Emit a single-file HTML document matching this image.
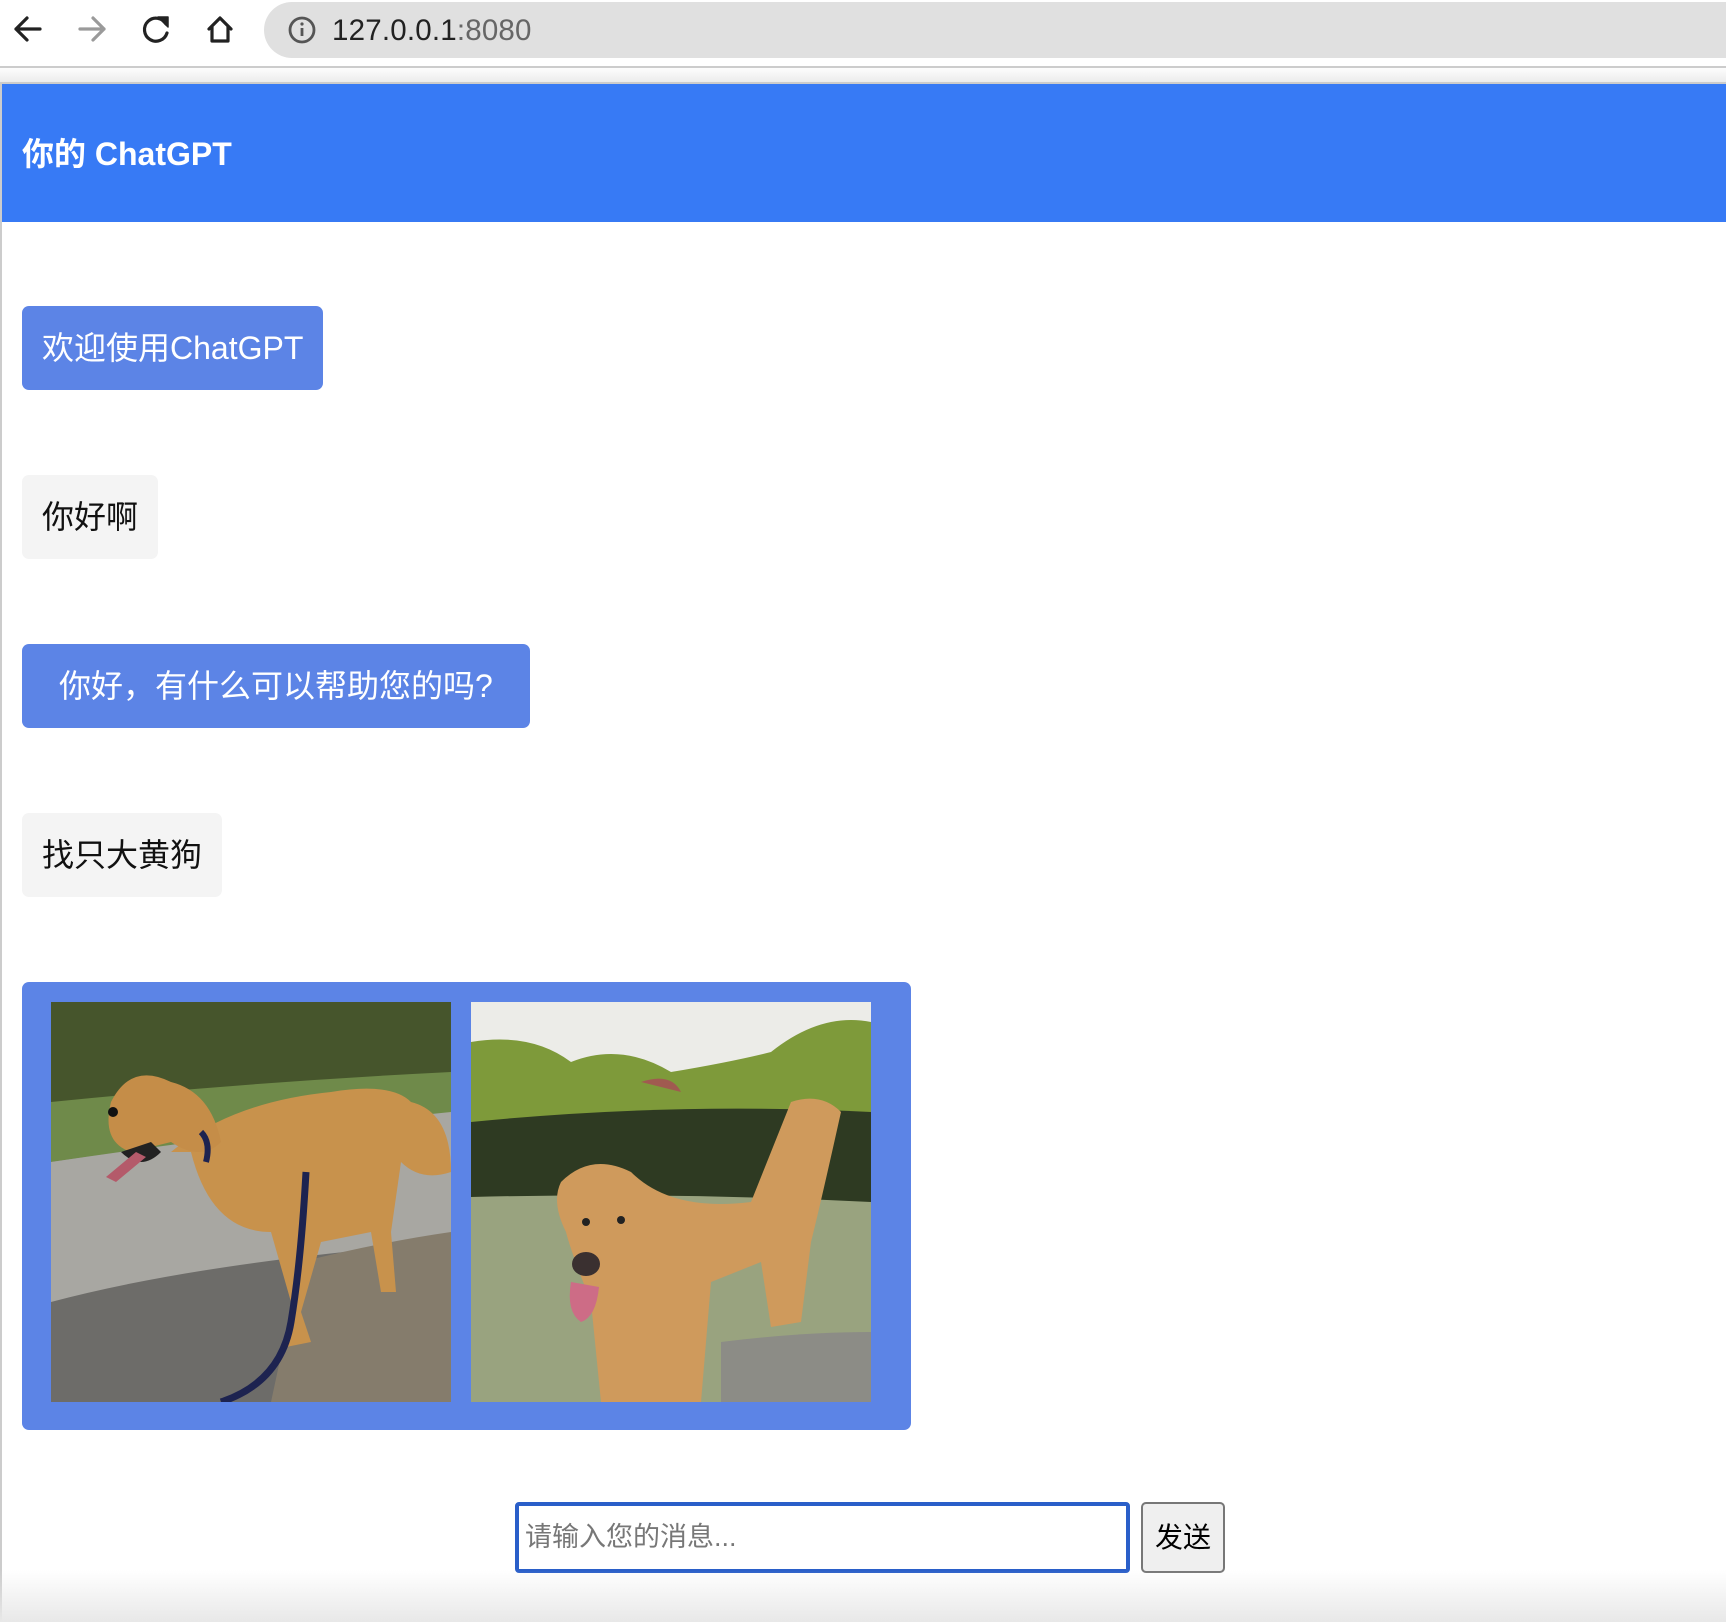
<!DOCTYPE html>
<html><head><meta charset="utf-8">
<style>
*{margin:0;padding:0;box-sizing:border-box}
html,body{width:1726px;height:1622px;overflow:hidden;background:#fff;font-family:"Liberation Sans","Noto Sans CJK SC",sans-serif}
.chrome{position:absolute;left:0;top:0;width:1726px;height:66px;background:#fff}
.url{position:absolute;left:264px;top:2px;width:1500px;height:56px;border-radius:28px;background:#e0e0e0}
.url span{position:absolute;left:68px;top:12px;font-size:29.5px;color:#222;letter-spacing:0.2px}
.url span i{font-style:normal;color:#666}
.sep1{position:absolute;left:0;top:66px;width:1726px;height:2px;background:#ccc}
.grad1{position:absolute;left:0;top:68px;width:1726px;height:14px;background:linear-gradient(#fdfdfd,#ececec)}
.sep2{position:absolute;left:0;top:82px;width:1726px;height:2px;background:#ccc}
.lb{position:absolute;left:0;top:84px;width:2px;height:1538px;background:#ccc}
.header{position:absolute;left:2px;top:84px;width:1724px;height:138px;background:#377af5}
.header h1{position:absolute;left:20px;top:50px;font-size:32px;font-weight:bold;color:#fff;line-height:40px}
.b{position:absolute;left:22px;height:84px;border-radius:7px;font-size:32px;line-height:84px;padding:0 20px;white-space:nowrap}
.blue{background:#5c84e6;color:#fff}
.gray{background:#f4f4f4;color:#111}
.box{position:absolute;left:22px;top:982px;width:889px;height:448px;background:#5c84e6;border-radius:7px}
.img{position:absolute;top:1002px;width:400px;height:400px}
.bottom{position:absolute;left:0;top:1570px;width:1726px;height:52px;background:linear-gradient(rgba(255,255,255,0),#e8e8e8)}
.inp{position:absolute;left:515px;top:1502px;width:615px;height:71px;border:4px solid #2a5fc9;border-radius:4px;background:#fff;font-size:27px;color:#777;line-height:63px;padding-left:6px}
.btn{position:absolute;left:1141px;top:1502px;width:84px;height:71px;border:2px solid #777;border-radius:5px;background:#efefef;font-size:28px;color:#000;text-align:center;line-height:67px}
</style></head><body>
<div class="chrome">
<svg width="260" height="60" style="position:absolute;left:0;top:0" fill="none" stroke-width="3.2" stroke-linecap="round" stroke-linejoin="round">
<path d="M40 29H16M27 18L16 29L27 40" stroke="#222"/>
<path d="M80 29H104M93 18L104 29L93 40" stroke="#9a9a9a"/>
<path d="M166 24A11.5 11.5 0 1 0 167 33" stroke="#222"/>
<path d="M158 17H168V27Z" fill="#222" stroke="#222" stroke-width="1.5"/>
<path d="M209 29L220 18L231 29M212 27V41H228V27" stroke="#222"/>
</svg>
<div class="url">
<svg width="30" height="30" style="position:absolute;left:23px;top:13px" fill="none"><circle cx="15" cy="15" r="12" stroke="#555" stroke-width="2.8"/><path d="M15 13v8" stroke="#555" stroke-width="2.8"/><circle cx="15" cy="9" r="1.6" fill="#555"/></svg>
<span>127.0.0.1<i>:8080</i></span></div>
</div>
<div class="sep1"></div><div class="grad1"></div><div class="sep2"></div>
<div class="lb"></div>
<div class="header"><h1>你的 ChatGPT</h1></div>

<div class="b blue" style="top:306px">欢迎使用ChatGPT</div>
<div class="b gray" style="top:475px">你好啊</div>
<div class="b blue" style="top:644px;padding:0 37px">你好，有什么可以帮助您的吗?</div>
<div class="b gray" style="top:813px">找只大黄狗</div>

<div class="box"></div>
<svg class="img" style="left:51px" viewBox="0 0 400 400">
<rect width="400" height="400" fill="#8e8e8a"/>
<rect width="400" height="110" fill="#3d4a25"/>
<path d="M0 0H400V100Q300 110 200 120T0 140Z" fill="#46552c"/>
<path d="M0 100Q200 80 400 70V120Q200 130 0 160Z" fill="#6f8a4a"/>
<path d="M0 160Q200 130 400 110V400H0Z" fill="#a8a7a2"/>
<path d="M0 300Q150 260 400 240V400H0Z" fill="#6d6c69"/>
<path d="M250 260Q330 240 400 230V400H220Z" fill="#857c6c"/>
<path d="M120 150Q180 100 280 90Q340 80 360 100Q400 110 400 170Q370 180 350 160L340 230L345 290L330 290L320 230L270 240L250 310L260 340L235 345L240 300L220 230Q160 230 140 150Z" fill="#c8924c"/>
<path d="M60 100Q80 60 120 80Q160 90 170 140Q150 160 120 140L80 150Q50 140 60 100Z" fill="#c58d48"/>
<path d="M70 150Q90 170 110 150L100 140Z" fill="#222"/>
<path d="M55 175L85 150L95 155L65 180Z" fill="#b45a6a"/>
<circle cx="62" cy="110" r="5" fill="#111"/>
<path d="M255 170Q250 260 240 320T170 400" stroke="#1d2350" stroke-width="7" fill="none"/>
<path d="M150 130Q160 140 155 160" stroke="#1d2350" stroke-width="6" fill="none"/>
</svg>
<svg class="img" style="left:471px" viewBox="0 0 400 400">
<rect width="400" height="400" fill="#8d9a72"/>
<rect width="400" height="90" fill="#ecece8"/>
<path d="M0 40Q60 30 100 60Q150 40 200 70Q260 60 300 50Q350 10 400 20V200H0Z" fill="#7e9a3a"/>
<path d="M0 120Q200 100 400 110V200H0Z" fill="#2e3a22"/>
<path d="M0 195Q200 190 400 200V400H0Z" fill="#99a37f"/>
<path d="M250 340Q330 330 400 330V400H250Z" fill="#8c8c86"/>
<path d="M170 80Q200 70 210 90Z" fill="#a05a50"/>
<path d="M90 180Q120 150 160 170Q200 210 280 200Q300 150 320 100Q350 90 370 110Q350 200 340 240L330 320L300 325L290 260L240 280L230 400H130L120 300Q100 250 95 230Q80 200 90 180Z" fill="#cf9a5c"/>
<circle cx="115" cy="220" r="4" fill="#222"/><circle cx="150" cy="218" r="4" fill="#222"/>
<ellipse cx="115" cy="262" rx="14" ry="12" fill="#3a3030"/>
<path d="M100 280Q95 310 110 320Q125 315 128 285Z" fill="#cd6c86"/>
</svg>

<div class="inp">请输入您的消息...</div>
<div class="btn">发送</div>
<div class="bottom"></div>
</body></html>
